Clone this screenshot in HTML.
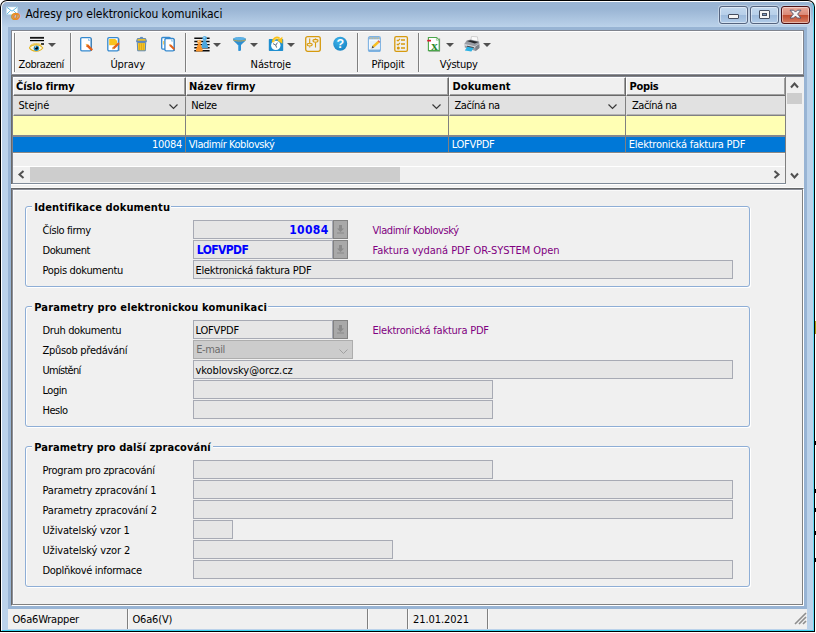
<!DOCTYPE html>
<html lang="cs">
<head>
<meta charset="utf-8">
<title>Adresy pro elektronickou komunikaci</title>
<style>
*{box-sizing:border-box;margin:0;padding:0}
html,body{width:816px;height:633px;overflow:hidden;background:#fff}
body{position:relative;font-family:"Liberation Sans",sans-serif;font-size:11px;color:#000;line-height:13px}
.a,.t,svg{position:absolute}
.t{white-space:nowrap;height:13px;line-height:13px;font-family:"DejaVu Sans Condensed","Liberation Sans",sans-serif}
.lib{font-family:"Liberation Sans",sans-serif}
#win{left:0;top:0;width:815px;height:632px;background:#000;border-radius:7px 7px 0 0}
#frame{left:1px;top:1px;width:813px;height:630px;border-radius:6px 6px 0 0;background:linear-gradient(#9ab5d4 0,#9ab5d4 7px,#bbd2ea 25px,#bbd2ea 100%);border:1px solid #fff;border-right-color:#5fdcf5;border-bottom-color:#38d4f2}
#inner{left:8px;top:27px;width:799px;height:582px;background:#98b4d4}
.wb{top:6px;width:29px;height:18px;border:1px solid #55647f;border-radius:3px;background:linear-gradient(#c3d8ee 0,#b7cfe9 8px,#9dbadb 8px,#b1cbe8 16px);box-shadow:inset 0 0 0 1px rgba(255,255,255,.45),0 0 0 1px rgba(255,255,255,.35)}
#tb{left:11px;top:30px;width:793px;height:45px;background:#f0f0f0;border:1px solid #80848e;border-bottom-color:#8c8f98;box-shadow:inset 1px 1px 0 #fff,inset -1px -1px 0 #fff,inset 2px 0 0 #fafafa}
.sep{position:absolute;top:33px;width:2px;height:39px;background:#808080;border-right:1px solid #fafafa}
.dd{position:absolute;top:43px;width:0;height:0;border:4px solid transparent;border-top-color:#505050;border-bottom:0}
#grid{left:11px;top:75px;width:793px;height:110px;background:#f0f0f0;border:1px solid #696969;border-right:0;border-bottom:0;box-shadow:inset 1px 1px 0 #7e828c}
.hc{position:absolute;top:77px;height:19px;background:#f0f0f0;border:1px solid;border-color:#fff #696969 #696969 #fff;box-shadow:inset -1px -1px 0 #a0a0a0}
.fc{position:absolute;top:96px;height:20px;background:#e1e1e1;border:1px solid;border-color:#e1e1e1 #808080 #808084 #e1e1e1;box-shadow:inset 0 -1px 0 #b4b4b4}
.vl{position:absolute;width:1px;background:#808080}
.inp{position:absolute;height:19px;background:#e6e6e6;border:1px solid #a7aab4}
.btn{position:absolute;width:15px;height:19px;background:#a9a9a9;border:1px solid #828282}
.btn svg{left:3px;top:4px}
.gb{position:absolute;left:25px;width:725px;border:1px solid #8eaed6;border-radius:3px;box-shadow:1px 1px 0 #fff,inset 1px 1px 0 #fff}
.gbm{position:absolute;left:32px;height:4px;background:#f0f0f0}
.sl{position:absolute;top:609px;width:2px;height:20px;background:#808080;border-right:1px solid #fafafa}
</style>
</head>
<body>
<div id="win" class="a"></div>
<div id="frame" class="a"></div>
<div id="inner" class="a"></div>
<!-- window buttons -->
<div class="a wb" style="left:719px"></div>
<div class="a wb" style="left:750px"></div>
<div class="a wb" id="close" style="left:781px;border-color:#4d0f13;background:linear-gradient(#e9a99b 0,#d98876 8px,#c1492c 8px,#d47f66 16px)"></div>
<div class="a" style="left:728px;top:14px;width:11px;height:5px;background:#f4f4f4;border:1px solid #454e60;border-radius:1px"></div>
<div class="a" style="left:759px;top:10px;width:11px;height:9px;background:#f4f4f4;border:1px solid #454e60;border-radius:1px"></div>
<div class="a" style="left:762px;top:13px;width:5px;height:3px;background:#7f9cc2;border:1px solid #454e60"></div>
<svg style="left:789px;top:9px" width="13" height="11" viewBox="0 0 13 11"><path d="M1 1.2 L4.6 1.2 L6.5 3.1 L8.4 1.2 L12 1.2 L8.6 5.1 L12 9 L8.4 9 L6.5 7.1 L4.6 9 L1 9 L4.4 5.1 Z" fill="#f6f6f6" stroke="#50546a" stroke-width="0.9"/></svg>

<!-- toolbar -->
<div class="a" id="tb"></div>
<div class="sep" style="left:14px"></div>
<div class="sep" style="left:70px"></div>
<div class="sep" style="left:185px"></div>
<div class="sep" style="left:357px"></div>
<div class="sep" style="left:418px"></div>
<div class="dd" style="left:48px"></div>
<div class="dd" style="left:213px"></div>
<div class="dd" style="left:250px"></div>
<div class="dd" style="left:287px"></div>
<div class="dd" style="left:446px"></div>
<div class="dd" style="left:483px"></div>
<!--ICONS-START-->
<!-- title icon -->
<svg style="left:6px;top:6px" width="16" height="16" viewBox="0 0 16 16"><rect x="0.5" y="1" width="11" height="7.5" fill="#fff" stroke="#bfe3f3" stroke-width="0.6"/><path d="M0.8 1.2 L6 5.2 L11.2 1.2 M0.8 8.3 L4.6 4.4 M11.2 8.3 L7.4 4.4" fill="none" stroke="#58b6de" stroke-width="0.9"/><text x="9.8" y="12.7" font-family="Liberation Sans,sans-serif" font-size="9.4" font-weight="bold" fill="#e98b22" stroke="#e98b22" stroke-width="0.55" text-anchor="middle">@</text></svg>

<!-- eye -->
<svg style="left:29px;top:36px" width="16" height="16" viewBox="0 0 16 16"><rect x="1" y="0.9" width="14" height="1.8" fill="#151515"/><rect x="1" y="4" width="14" height="1.2" fill="#000"/><rect x="12" y="7.2" width="3" height="1.6" fill="#151515"/><path d="M0.4 11.8 C3 8, 10.5 7.6, 13.8 12 C10.5 16.4, 3 16, 0.4 11.8 Z" fill="#fdf6dc" stroke="#e3b31d" stroke-width="1.1"/><path d="M0.8 10 C4 6.8, 9.5 6.6, 12.6 9.2 M1.4 10.8 C4.4 8, 9.2 7.8, 12 9.8" fill="none" stroke="#ecc23a" stroke-width="0.8"/><circle cx="7.4" cy="12.3" r="2.7" fill="#1d8cc4"/><circle cx="7.5" cy="12" r="1.5" fill="#000"/><circle cx="6.7" cy="11" r="0.7" fill="#fff"/></svg>

<!-- new doc -->
<svg style="left:78px;top:36px" width="16" height="16" viewBox="0 0 16 16"><rect x="13" y="2.5" width="1" height="12.3" fill="#4a3c3a" opacity=".8"/><rect x="2.7" y="1.7" width="10.4" height="13.1" rx="1.2" fill="#fff" stroke="#3489cf" stroke-width="1.3"/><path d="M10 2.2 L12.6 4.8 L10 4.8 Z" fill="#8cc4ec"/><path d="M8 8.4 L10 8.2 L15 13.2 L13.4 14.9 L8.3 10.2 Z" fill="#e2601a"/><path d="M7.6 7.8 L10 8.2 L8.3 10.2 Z" fill="#f0c060"/></svg>

<!-- edit doc -->
<svg style="left:106px;top:36px" width="16" height="16" viewBox="0 0 16 16"><rect x="12.4" y="2.5" width="1" height="12.3" fill="#4a3c3a" opacity=".7"/><rect x="1.8" y="1.7" width="10.6" height="13.1" rx="1.2" fill="#fff" stroke="#3489cf" stroke-width="1.3"/><path d="M3.2 2.9 L9.2 2.9 L11 4.7 L11 9.2 L3.2 9.2 Z" fill="#f9c21c"/><path d="M12.4 6.2 L13.6 8 L8.4 12.9 L6.4 13.2 L6.8 11.2 Z" fill="#e2601a"/><path d="M6.2 13.3 L6.9 11.3 L8.2 12.6 Z" fill="#e7b04a"/></svg>

<!-- trash -->
<svg style="left:134px;top:36px" width="16" height="16" viewBox="0 0 16 16"><path d="M6.4 2.2 L6.4 1.4 L8.6 1.4 L8.6 2.2" fill="none" stroke="#4d7fb8" stroke-width="1"/><path d="M2.6 5.2 L3.4 2.6 L11.6 2.6 L12.4 5.2 Z" fill="#f5c426" stroke="#4d7fb8" stroke-width="0.9"/><rect x="2.3" y="5" width="10.4" height="1.3" fill="#5b86c4"/><path d="M3.3 6.6 L11.7 6.6 L11.3 14.8 L3.7 14.8 Z" fill="#f7c628" stroke="#4d7fb8" stroke-width="0.9"/><path d="M5.6 7.4 L5.6 14 M7.5 7.4 L7.5 14 M9.4 7.4 L9.4 14" stroke="#dca81a" stroke-width="0.9"/></svg>

<!-- copy doc -->
<svg style="left:160px;top:36px" width="16" height="16" viewBox="0 0 16 16"><rect x="1.7" y="1.5" width="8.6" height="11.6" rx="1" fill="#fff" stroke="#3489cf" stroke-width="1.3"/><rect x="3" y="5" width="1.2" height="3.5" fill="#f5d060"/><rect x="14" y="3.2" width="0.9" height="11.6" fill="#4a3c3a" opacity=".7"/><rect x="4.9" y="2.5" width="9.2" height="12.3" rx="1.2" fill="#fff" stroke="#3489cf" stroke-width="1.3"/><path d="M11.2 3 L13.6 5.4 L11.2 5.4 Z" fill="#8cc4ec"/><path d="M9.2 8.6 L11 8.4 L15 12.6 L13.7 14.1 L9.5 10.1 Z" fill="#e2601a"/><path d="M9.2 8.2 L10.8 8.6 L9.7 9.8 Z" fill="#f3c45a"/></svg>

<!-- people -->
<svg style="left:194px;top:36px" width="16" height="16" viewBox="0 0 16 16"><path d="M0.3 2.2 H15.6 M0.3 5.5 H15.6 M0.3 8.6 H15.6 M0.3 11.7 H15.6 M0.3 14.7 H15.6" stroke="#0a0a0a" stroke-width="1.4"/><circle cx="10.7" cy="2.3" r="2.2" fill="#56b0e6"/><path d="M10.7 4 C12.4 4.2,12.6 6.5,13.6 9.2 C14.4 11.4,14.4 11.8,13.2 11.9 L8.2 11.9 C7 11.8,7 11.4,7.8 9.2 C8.8 6.5,9 4.2,10.7 4 Z" fill="#4aa6de"/><circle cx="5.3" cy="5.9" r="2.2" fill="#fba038"/><path d="M5.3 7.6 C7 7.8,7.2 10,8.2 12.6 C9 14.8,9 15.3,7.8 15.4 L2.8 15.4 C1.6 15.3,1.6 14.8,2.4 12.6 C3.4 10,3.6 7.8,5.3 7.6 Z" fill="#f8942a"/><circle cx="10.2" cy="1.7" r="0.8" fill="#b9e0f6"/><circle cx="4.8" cy="5.3" r="0.8" fill="#fde0b8"/></svg>

<!-- funnel -->
<svg style="left:232px;top:36px" width="16" height="16" viewBox="0 0 16 16"><path d="M1 3.4 C1 0.6,14 0.6,14 3.4 C14 5,10.2 7.2,9 9.2 L9 14.2 C8.6 15.2,6.4 15.2,6 14.2 L6 9.2 C4.8 7.2,1 5,1 3.4 Z" fill="#2b8fd4"/><ellipse cx="7.5" cy="2.8" rx="6.2" ry="1.5" fill="#5cb2e6"/><path d="M1.2 3.8 C3 5.4,12 5.4,13.8 3.8" fill="none" stroke="#d9a83a" stroke-width="0.9"/><path d="M6.6 9 L6.6 14.2" stroke="#6cbcec" stroke-width="0.8"/></svg>

<!-- clock -->
<svg style="left:268px;top:35px" width="17" height="17" viewBox="0 0 17 17"><rect x="0.8" y="4" width="14.4" height="12" rx="0.8" fill="#1f8fd0"/><circle cx="7.8" cy="10.4" r="4.7" fill="#fff"/><path d="M7.8 10.2 L5 8.6 M7.8 10.2 L9.4 7.6 M7.8 10.2 L8.6 12.6" stroke="#3a4a5a" stroke-width="0.8" fill="none"/><path d="M5 7.2 C5.2 3.8,8.4 1.6,11.4 3.8" fill="none" stroke="#fbc114" stroke-width="2.5" stroke-linecap="butt"/><path d="M9.4 5.4 L14.4 1.8 L14.4 8.8 Z" fill="#fbc114"/><path d="M5.6 6.6 C6 4.4,8.2 2.8,10.6 3.8" fill="none" stroke="#fde48c" stroke-width="0.8"/></svg>

<!-- sliders -->
<svg style="left:305px;top:36px" width="16" height="16" viewBox="0 0 16 16"><rect x="0.7" y="0.7" width="14.6" height="14.6" rx="2" fill="none" stroke="#d69a0e" stroke-width="1.3"/><path d="M4.7 2.4 V7.4 M4.7 10.4 V11.4 M10.5 2.4 V3.4 M10.5 6.6 V11.4" stroke="#d69a0e" stroke-width="1.1" fill="none"/><ellipse cx="4.7" cy="8.6" rx="2.5" ry="1.4" fill="#f7ecd0" stroke="#d69a0e" stroke-width="1.1"/><ellipse cx="10.5" cy="4.8" rx="2.5" ry="1.4" fill="#f7ecd0" stroke="#d69a0e" stroke-width="1.1"/></svg>

<!-- help -->
<svg style="left:333px;top:36px" width="15" height="16" viewBox="0 0 15 16"><defs><radialGradient id="hg" cx="40%" cy="30%" r="75%"><stop offset="0" stop-color="#3fb4ec"/><stop offset="1" stop-color="#1784c4"/></radialGradient></defs><circle cx="7.2" cy="7.8" r="7" fill="url(#hg)"/><text x="7.3" y="12.3" font-family="Liberation Sans,sans-serif" font-size="12.5" font-weight="bold" fill="#fff" text-anchor="middle">?</text></svg>

<!-- notepad -->
<svg style="left:367px;top:36px" width="16" height="16" viewBox="0 0 16 16"><rect x="1.4" y="0.6" width="12" height="15" rx="1.6" fill="#f4f9fe" stroke="#7db2e2" stroke-width="1.1"/><rect x="1.9" y="1.1" width="11" height="2.2" fill="#8fb4d8"/><path d="M3.4 2.1 H4.6 M6 2.1 H7.2 M8.6 2.1 H9.8 M11 2.1 H12" stroke="#e8c860" stroke-width="1"/><path d="M3 6 H12 M3 8 H12 M3 10 H12 M3 12 H12" stroke="#c8e0f4" stroke-width="0.7"/><path d="M1.9 14.2 H13" stroke="#5c9cd4" stroke-width="1.2"/><path d="M10.6 5 L12.4 6.8 L7.2 11.6 L5.4 9.8 Z" fill="#f8bf22"/><path d="M10.6 5 L11.5 4.2 L13.3 6 L12.4 6.8 Z" fill="#d8483a"/><path d="M5.4 9.8 L7.2 11.6 L4.6 12.4 Z" fill="#5a4a3a"/></svg>

<!-- checklist -->
<svg style="left:394px;top:36px" width="15" height="16" viewBox="0 0 15 16"><rect x="0.8" y="0.7" width="12.6" height="14.6" rx="1.4" fill="none" stroke="#d69a0e" stroke-width="1.3"/><path d="M7 4 H11 M7 8 H11 M7 12 H11" stroke="#d69a0e" stroke-width="1.5"/><path d="M2.8 3.8 L4 5 L6 2.8 M2.8 7.8 L4 9 L6 6.8" fill="none" stroke="#d69a0e" stroke-width="1.2"/><circle cx="4.3" cy="12" r="1.5" fill="#d69a0e"/></svg>

<!-- excel -->
<svg style="left:426px;top:36px" width="16" height="16" viewBox="0 0 16 16"><rect x="13.2" y="2.4" width="0.9" height="12.8" fill="#8a8a8a"/><rect x="3" y="14.6" width="11" height="0.9" fill="#8a8a8a"/><path d="M2.4 1.5 L10.6 1.5 L13.2 4.1 L13.2 14.6 L2.4 14.6 Z" fill="#fff" stroke="#4aa64a" stroke-width="1.1"/><path d="M10.4 1.8 L10.4 4.3 L12.9 4.3" fill="#d8ecd8" stroke="#7cc07c" stroke-width="0.6"/><rect x="1.2" y="3.8" width="3.8" height="1.7" rx="0.5" fill="#d8182a"/><text x="8.6" y="13.9" font-family="Liberation Serif,serif" font-size="13" font-weight="bold" fill="#2a8c2e" text-anchor="middle">x</text></svg>

<!-- printer -->
<svg style="left:464px;top:36px" width="16" height="16" viewBox="0 0 16 16"><path d="M7.6 0.4 L13.4 0.8 L14 5.4 L6.6 5 Z" fill="#fafafa" stroke="#b8b8b8" stroke-width="0.6"/><path d="M2.6 4.6 L6.6 3.6 L15.2 5.6 L15.4 12 L11.6 15 L0.8 11.4 L0.6 7.6 Z" fill="#989ca4"/><path d="M2.8 5 L6.6 4.2 L14.6 6 L10.8 7.6 Z" fill="#26282c"/><path d="M0.8 8 L10.8 10.2 L15.2 7.6 L15.2 9 L10.8 11.8 L0.8 9.4 Z" fill="#d4d6da"/><path d="M11.4 10.4 L15.3 8 L15.4 12 L11.6 15 Z" fill="#7c8088"/><path d="M3.4 10.6 L9.6 11.8 L7.4 15.6 L0.8 14.4 Z" fill="#2bb2e4"/><path d="M3 10.2 L9.8 11.6" stroke="#3a3c40" stroke-width="0.9"/></svg>
<!--ICONS-END-->

<!-- grid -->
<div class="a" id="grid"></div>
<div class="hc" style="left:13px;width:173px"></div>
<div class="hc" style="left:186px;width:263px"></div>
<div class="hc" style="left:449px;width:177px"></div>
<div class="hc" style="left:626px;width:160px"></div>
<div class="fc" style="left:13px;width:173px"></div>
<div class="fc" style="left:186px;width:263px"></div>
<div class="fc" style="left:449px;width:177px"></div>
<div class="fc" style="left:626px;width:160px"></div>
<div class="a" style="left:13px;top:116px;width:773px;height:21px;background:#ffffb4;border-bottom:2px solid #8a8a8a;border-bottom-color:#848890"></div>
<div class="a" style="left:13px;top:137px;width:773px;height:16px;background:#0078d7;border-bottom:1px solid #8c8884"></div>
<div class="a" style="left:13px;top:153px;width:772px;height:1px;background:#f8f8f8"></div>
<div class="vl" style="left:185px;top:116px;height:36px"></div>
<div class="vl" style="left:448px;top:116px;height:36px"></div>
<div class="vl" style="left:625px;top:116px;height:36px"></div>
<div class="vl" style="left:785px;top:77px;height:106px"></div>
<!-- scrollbars -->
<div class="a" style="left:13px;top:166px;width:772px;height:1px;background:#fff"></div>
<div class="a" style="left:30px;top:167px;width:370px;height:15px;background:#cdcdcd"></div>
<div class="a" style="left:787px;top:93px;width:15px;height:11px;background:#cdcdcd"></div>
<svg style="left:17px;top:170px" width="9" height="9" viewBox="0 0 9 9"><path d="M6.5 1 L2.5 4.5 L6.5 8" fill="none" stroke="#505050" stroke-width="2"/></svg>
<svg style="left:772px;top:170px" width="9" height="9" viewBox="0 0 9 9"><path d="M2.5 1 L6.5 4.5 L2.5 8" fill="none" stroke="#505050" stroke-width="2"/></svg>
<svg style="left:790px;top:81px" width="9" height="9" viewBox="0 0 9 9"><path d="M1 6.5 L4.5 2.5 L8 6.5" fill="none" stroke="#505050" stroke-width="2"/></svg>
<svg style="left:790px;top:171px" width="9" height="9" viewBox="0 0 9 9"><path d="M1 2.5 L4.5 6.5 L8 2.5" fill="none" stroke="#505050" stroke-width="2"/></svg>
<!-- filter chevrons -->
<svg style="left:169px;top:104px" width="9" height="6" viewBox="0 0 9 6"><path d="M0.5 0.5 L4.5 4.5 L8.5 0.5" fill="none" stroke="#383838" stroke-width="1.2"/></svg>
<svg style="left:432px;top:104px" width="9" height="6" viewBox="0 0 9 6"><path d="M0.5 0.5 L4.5 4.5 L8.5 0.5" fill="none" stroke="#383838" stroke-width="1.2"/></svg>
<svg style="left:608px;top:104px" width="9" height="6" viewBox="0 0 9 6"><path d="M0.5 0.5 L4.5 4.5 L8.5 0.5" fill="none" stroke="#383838" stroke-width="1.2"/></svg>

<div class="a" style="left:13px;top:183px;width:773px;height:1px;background:#7f8b99"></div>
<div class="a" style="left:11px;top:184px;width:775px;height:4px;background:#f0f0f0;border-top:1px solid #fff;border-bottom:1px solid #fafafa"></div>
<div class="a" style="left:786px;top:185px;width:18px;height:3px;background:#f0f0f0;border-bottom:1px solid #fafafa"></div>

<!-- form panel -->
<div class="a" id="panel" style="left:11px;top:188px;width:793px;height:418px;background:#f0f0f0;border:1px solid;border-color:#646668 #fff #fff #696969;box-shadow:inset 1px 1px 0 #8a8e98,inset -1px -1px 0 #808080,inset 2px 2px 0 #fafafa"></div>

<div class="gb" style="top:206px;height:81px"></div>
<div class="gbm" style="top:205px;width:139px"></div>
<div class="inp" style="left:193px;top:220px;width:140px"></div><div class="btn" style="left:333px;top:220px"><svg width="7" height="9" viewBox="0 0 7 9"><path d="M2 0 H5 V3.6 H7 L3.5 7 L0 3.6 H2 Z M0 7.6 H7 V8.6 H0 Z" fill="#8a8a8a"/></svg></div>
<div class="inp" style="left:193px;top:240px;width:140px"></div><div class="btn" style="left:333px;top:240px"><svg width="7" height="9" viewBox="0 0 7 9"><path d="M2 0 H5 V3.6 H7 L3.5 7 L0 3.6 H2 Z M0 7.6 H7 V8.6 H0 Z" fill="#8a8a8a"/></svg></div>
<div class="inp" style="left:193px;top:260px;width:540px"></div>

<div class="gb" style="top:306px;height:121px"></div>
<div class="gbm" style="top:305px;width:236px"></div>
<div class="inp" style="left:193px;top:320px;width:140px"></div><div class="btn" style="left:333px;top:320px"><svg width="7" height="9" viewBox="0 0 7 9"><path d="M2 0 H5 V3.6 H7 L3.5 7 L0 3.6 H2 Z M0 7.6 H7 V8.6 H0 Z" fill="#8a8a8a"/></svg></div>
<div class="inp" style="left:193px;top:340px;width:160px;background:#cccccc;border-color:#adadad"></div>
<svg style="left:339px;top:349px" width="9" height="6" viewBox="0 0 9 6"><path d="M0.5 0.5 L4.5 4.5 L8.5 0.5" fill="none" stroke="#a0a0a0" stroke-width="1"/></svg>
<div class="inp" style="left:193px;top:360px;width:540px"></div>
<div class="inp" style="left:193px;top:380px;width:300px"></div>
<div class="inp" style="left:193px;top:400px;width:300px"></div>

<div class="gb" style="top:446px;height:141px"></div>
<div class="gbm" style="top:445px;width:181px"></div>
<div class="inp" style="left:193px;top:460px;width:300px"></div>
<div class="inp" style="left:193px;top:480px;width:540px"></div>
<div class="inp" style="left:193px;top:500px;width:540px"></div>
<div class="inp" style="left:193px;top:520px;width:40px"></div>
<div class="inp" style="left:193px;top:540px;width:200px"></div>
<div class="inp" style="left:193px;top:560px;width:540px"></div>

<!-- status bar -->
<div class="a" id="status" style="left:8px;top:609px;width:799px;height:20px;background:#f0f0f0"></div>
<div class="sl" style="left:127px"></div>
<div class="sl" style="left:367px"></div>
<div class="sl" style="left:407px"></div>
<div class="sl" style="left:487px"></div>
<svg style="left:794px;top:612px" width="13" height="13" viewBox="0 0 13 13"><path d="M1 12 L12 1 M5 12 L12 5 M9 12 L12 9" stroke="#8e8e8e" stroke-width="1.6" fill="none"/></svg>

<!-- edge specks -->
<div class="a" style="left:815px;top:321px;width:1px;height:13px;background:#a4a410"></div>
<div class="a" style="left:815px;top:441px;width:1px;height:4px;background:#000"></div>
<div class="a" style="left:815px;top:489px;width:1px;height:4px;background:#000"></div>
<div class="a" style="left:815px;top:508px;width:1px;height:4px;background:#000"></div>
<div class="a" style="left:815px;top:531px;width:1px;height:4px;background:#000"></div>
<div class="a" style="left:815px;top:558px;width:1px;height:4px;background:#000"></div>

<!-- texts -->
<div class="t" style="left:25.50px;top:8px;letter-spacing:-0.05px;font-size:12px;">Adresy pro elektronickou komunikaci</div>
<div class="t" style="left:18.60px;top:58px;letter-spacing:-0.49px;">Zobrazení</div>
<div class="t" style="left:110.40px;top:58px;letter-spacing:-0.12px;">Úpravy</div>
<div class="t" style="left:250.60px;top:58px;letter-spacing:-0.1px;">Nástroje</div>
<div class="t" style="left:371.60px;top:58px;letter-spacing:-0.19px;">Připojit</div>
<div class="t" style="left:439.70px;top:58px;letter-spacing:-0.27px;">Výstupy</div>
<div class="t" style="left:16.00px;top:80px;letter-spacing:-0.07px;font-weight:bold;">Číslo firmy</div>
<div class="t" style="left:189.00px;top:80px;letter-spacing:-0.02px;font-weight:bold;">Název firmy</div>
<div class="t" style="left:452.50px;top:80px;letter-spacing:0.08px;font-weight:bold;">Dokument</div>
<div class="t" style="left:629.50px;top:80px;letter-spacing:-0.32px;font-weight:bold;">Popis</div>
<div class="t" style="left:18.40px;top:99px;letter-spacing:-0.08px;">Stejné</div>
<div class="t" style="left:191.25px;top:99px;letter-spacing:-0.42px;">Nelze</div>
<div class="t" style="left:454.50px;top:99px;letter-spacing:-0.41px;">Začíná na</div>
<div class="t" style="left:632.00px;top:99px;letter-spacing:-0.47px;">Začíná na</div>
<div class="t" style="left:152.00px;top:138px;letter-spacing:-0.29px;color:#fff;">10084</div>
<div class="t" style="left:188.75px;top:138px;letter-spacing:-0.44px;color:#fff;">Vladimír Koblovský</div>
<div class="t" style="left:451.75px;top:138px;letter-spacing:-0.28px;color:#fff;">LOFVPDF</div>
<div class="t" style="left:628.75px;top:138px;letter-spacing:-0.22px;color:#fff;">Elektronická faktura PDF</div>
<div class="t" style="left:34.25px;top:201px;letter-spacing:0.13px;font-weight:bold;">Identifikace dokumentu</div>
<div class="t" style="left:42.50px;top:224px;letter-spacing:-0.38px;">Číslo firmy</div>
<div class="t" style="left:42.50px;top:244px;letter-spacing:-0.48px;">Dokument</div>
<div class="t" style="left:42.50px;top:264px;letter-spacing:-0.31px;">Popis dokumentu</div>
<div class="t" style="left:289.20px;top:224px;letter-spacing:0.36px;font-weight:bold;font-size:12px;color:#0000ff;">10084</div>
<div class="t" style="left:196.80px;top:244px;letter-spacing:-0.59px;font-weight:bold;font-size:12px;color:#0000ff;">LOFVPDF</div>
<div class="t" style="left:195.40px;top:264px;letter-spacing:-0.24px;">Elektronická faktura PDF</div>
<div class="t" style="left:372.50px;top:224px;letter-spacing:-0.41px;color:#800080;">Vladimír Koblovský</div>
<div class="t" style="left:372.50px;top:244px;letter-spacing:-0.05px;color:#800080;">Faktura vydaná PDF OR-SYSTEM Open</div>
<div class="t" style="left:34.25px;top:301px;letter-spacing:0.15px;font-weight:bold;">Parametry pro elektronickou komunikaci</div>
<div class="t" style="left:42.50px;top:324px;letter-spacing:-0.35px;">Druh dokumentu</div>
<div class="t" style="left:42.50px;top:344px;letter-spacing:-0.3px;">Způsob předávání</div>
<div class="t" style="left:42.50px;top:364px;letter-spacing:-0.72px;">Umístění</div>
<div class="t" style="left:42.50px;top:384px;letter-spacing:-0.48px;">Login</div>
<div class="t" style="left:42.50px;top:404px;letter-spacing:-0.49px;">Heslo</div>
<div class="t" style="left:195.50px;top:324px;letter-spacing:-0.16px;">LOFVPDF</div>
<div class="t" style="left:196.25px;top:343px;letter-spacing:-0.41px;color:#6d6d6d;">E-mail</div>
<div class="t" style="left:195.50px;top:364px;letter-spacing:-0.09px;">vkoblovsky@orcz.cz</div>
<div class="t" style="left:372.50px;top:324px;letter-spacing:-0.23px;color:#800080;">Elektronická faktura PDF</div>
<div class="t" style="left:34.25px;top:441px;letter-spacing:0.07px;font-weight:bold;">Parametry pro další zpracování</div>
<div class="t" style="left:42.50px;top:464px;letter-spacing:-0.27px;">Program pro zpracování</div>
<div class="t" style="left:42.50px;top:484px;letter-spacing:-0.18px;">Parametry zpracování 1</div>
<div class="t" style="left:42.50px;top:504px;letter-spacing:-0.16px;">Parametry zpracování 2</div>
<div class="t" style="left:42.50px;top:524px;letter-spacing:-0.15px;">Uživatelský vzor 1</div>
<div class="t" style="left:42.50px;top:544px;letter-spacing:-0.13px;">Uživatelský vzor 2</div>
<div class="t" style="left:42.50px;top:564px;letter-spacing:-0.31px;">Doplňkové informace</div>
<div class="t" style="left:12.50px;top:613px;letter-spacing:-0.2px;">O6a6Wrapper</div>
<div class="t" style="left:132.50px;top:613px;letter-spacing:-0.18px;">O6a6(V)</div>
<div class="t" style="left:413.00px;top:613px;letter-spacing:-0.07px;">21.01.2021</div>
</body>
</html>
